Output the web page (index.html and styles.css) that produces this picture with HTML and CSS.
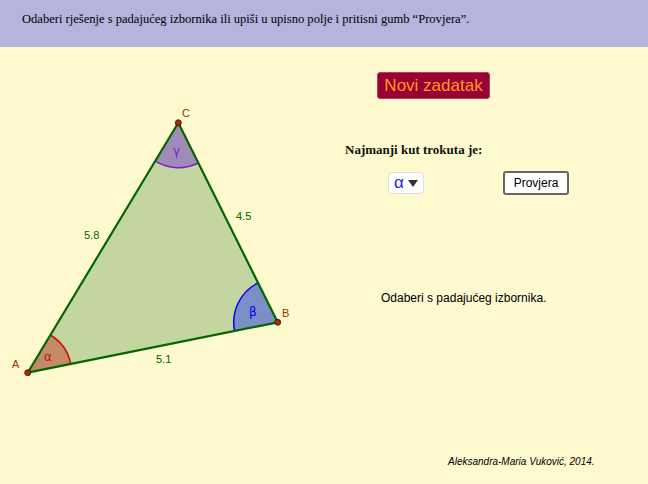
FILE: index.html
```html
<!DOCTYPE html>
<html>
<head>
<meta charset="utf-8">
<link rel="stylesheet" href="styles.css">
</head>
<body>
<div class="header">Odaberi rješenje s padajućeg izbornika ili upiši u upisno polje i pritisni gumb “Provjera”.</div>
<div class="main">
  <svg class="canvas" width="340" height="437" viewBox="0 47 340 437" xmlns="http://www.w3.org/2000/svg">
    <polygon points="27.7,372.7 277.7,322.3 178.3,122.7" fill="#c4d6a0"/>
    <path d="M27.7,372.7 L70.8,364.0 A44,44 0 0 0 50.4,335.0 Z" fill="#c48a68"/>
    <path d="M70.8,364.0 A44,44 0 0 0 50.4,335.0" fill="none" stroke="#cc1100" stroke-width="1.5"/>
    <path d="M277.7,322.3 L234.6,331.0 A44,44 0 0 1 258.1,282.9 Z" fill="#7b8fc6"/>
    <path d="M234.6,331.0 A44,44 0 0 1 258.1,282.9" fill="none" stroke="#0000ee" stroke-width="1.5"/>
    <path d="M178.3,122.7 L155.1,161.2 A45,45 0 0 0 198.4,163.0 Z" fill="#a08bb6"/>
    <path d="M155.1,161.2 A45,45 0 0 0 198.4,163.0" fill="none" stroke="#7722cc" stroke-width="1.5"/>
    <polygon points="27.7,372.7 277.7,322.3 178.3,122.7" fill="none" stroke="#006600" stroke-width="2.2" stroke-linejoin="round"/>
    <circle cx="27.7" cy="372.7" r="3" fill="#993300" stroke="#331100" stroke-width="0.8"/>
    <circle cx="277.7" cy="322.3" r="3" fill="#993300" stroke="#331100" stroke-width="0.8"/>
    <circle cx="178.3" cy="122.7" r="3" fill="#993300" stroke="#331100" stroke-width="0.8"/>
    <g class="pt">
      <text x="12" y="368">A</text>
      <text x="282" y="317">B</text>
      <text x="182" y="117">C</text>
    </g>
    <g class="len">
      <text x="84" y="239">5.8</text>
      <text x="236" y="220">4.5</text>
      <text x="156" y="363">5.1</text>
    </g>
    <text class="ang a" x="44" y="361">α</text>
    <text class="ang b" x="249" y="316">β</text>
    <text class="ang c" x="173" y="155">γ</text>
  </svg>
  <div class="panel">
    <div class="row-btn"><span class="novi">Novi zadatak</span></div>
    <div class="question">Najmanji kut trokuta je:</div>
    <div class="row-controls">
      <span class="select"><span class="sel-val">α</span><span class="caret"></span></span>
      <span class="provjera">Provjera</span>
    </div>
    <div class="msg">Odaberi s padajućeg izbornika.</div>
    <div class="author">Aleksandra-Maria Vuković, 2014.</div>
  </div>
</div>
</body>
</html>
```
FILE: styles.css
```css
html, body {
  margin: 0;
  padding: 0;
  background: #fff9cf;
}
body {
  width: 648px;
  height: 484px;
  overflow: hidden;
}
.header {
  height: 47px;
  box-sizing: border-box;
  background: #b6b3dd;
  font-family: "Liberation Serif", serif;
  font-size: 12.55px;
  color: #000;
  padding: 12px 0 0 22px;
}
.main {
  display: flex;
  height: 437px;
}
.canvas {
  display: block;
  flex: none;
}
.pt text {
  font-family: "Liberation Sans", sans-serif;
  font-size: 11px;
  fill: #993300;
}
.len text {
  font-family: "Liberation Sans", sans-serif;
  font-size: 11px;
  fill: #006600;
}
.ang {
  font-family: "DejaVu Sans", sans-serif;
  font-size: 12px;
}
.ang.a { fill: #cc1100; }
.ang.b { fill: #0000ee; }
.ang.c { fill: #7722cc; }
.panel {
  flex: 1;
  display: flex;
  flex-direction: column;
  font-family: "Liberation Sans", sans-serif;
}
.row-btn {
  padding: 25px 0 0 37px;
}
.novi {
  display: inline-block;
  box-sizing: border-box;
  width: 113px;
  height: 27px;
  line-height: 25px;
  background: #990033;
  border: 1px solid #b14063;
  border-radius: 3px;
  color: #ff9a1a;
  font-size: 17px;
  text-align: center;
}
.question {
  padding: 43px 0 0 5px;
  font-family: "Liberation Serif", serif;
  font-weight: bold;
  font-size: 13px;
  color: #111;
}
.row-controls {
  display: flex;
  align-items: center;
  padding: 13px 0 0 48px;
}
.select {
  display: inline-flex;
  align-items: center;
  box-sizing: border-box;
  width: 36px;
  height: 22px;
  background: #fff;
  border: 1px solid #ddd;
  border-radius: 4px;
  padding-left: 5px;
}
.sel-val {
  color: #2222ee;
  font-family: "Liberation Sans", sans-serif;
  font-size: 17px;
  line-height: 18px;
}
.caret {
  width: 0;
  height: 0;
  margin-left: 4px;
  border-left: 5px solid transparent;
  border-right: 5px solid transparent;
  border-top: 7px solid #333;
}
.provjera {
  display: inline-block;
  box-sizing: border-box;
  width: 66px;
  height: 24px;
  line-height: 20px;
  margin-left: 79px;
  background: #fff;
  border: 2px solid #666;
  border-radius: 3px;
  font-size: 12px;
  color: #000;
  text-align: center;
}
.msg {
  padding: 96px 0 0 41px;
  font-size: 12px;
  color: #000;
}
.author {
  padding: 151px 0 0 108px;
  font-size: 10px;
  font-style: italic;
  color: #000;
}
```
